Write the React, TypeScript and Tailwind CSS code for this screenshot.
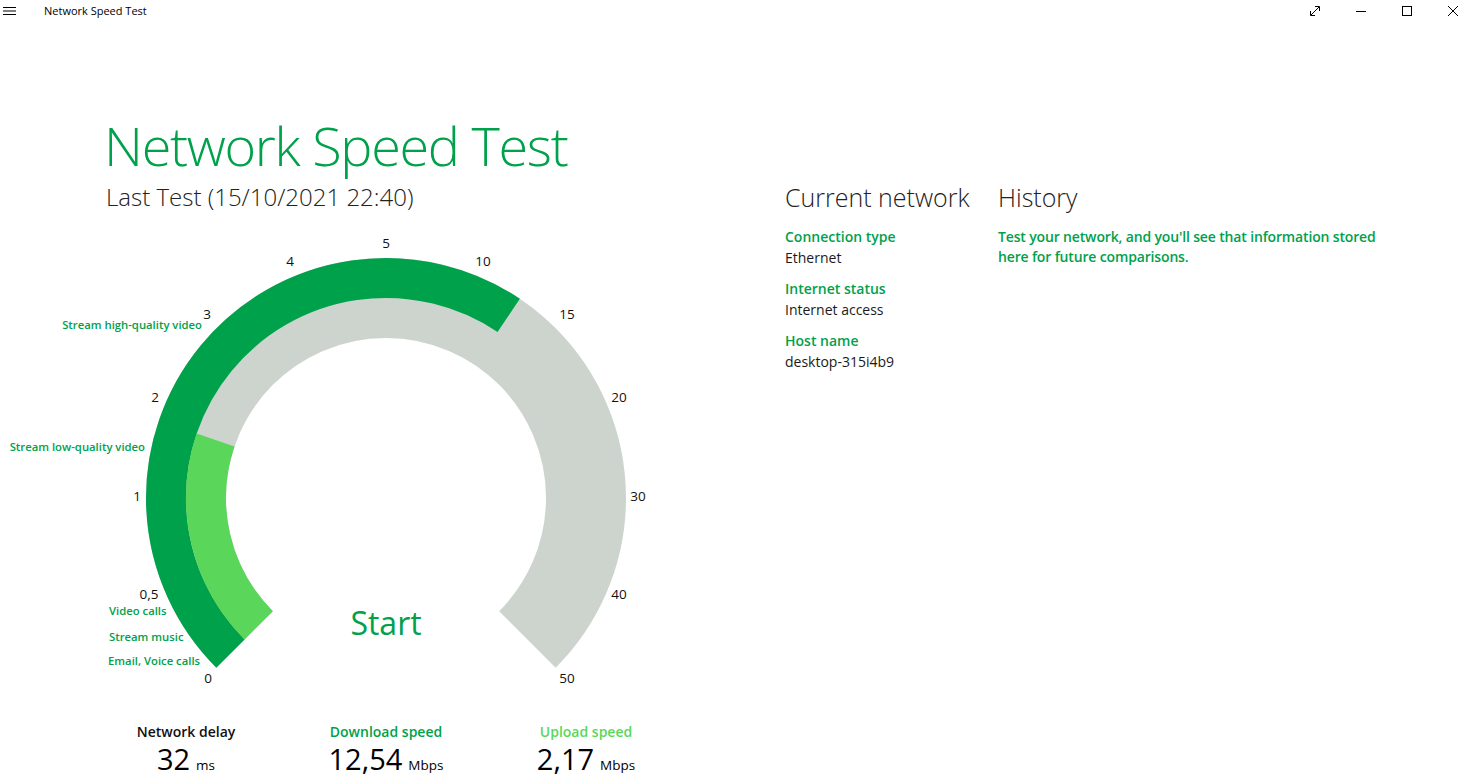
const GREEN = "#00A14B";
const LIGHT = "#5AD75A";
const GRAY = "#CDD4CE";

// gauge centre inside the svg (svg top sits at page y=230)
const CX = 386;
const CY = 267;
const TOP = 230;

function pt(r: number, deg: number): [number, number] {
  const a = (deg * Math.PI) / 180;
  return [CX + r * Math.cos(a), CY - r * Math.sin(a)];
}

function arc(r: number, from: number, to: number) {
  const [x1, y1] = pt(r, from);
  const [x2, y2] = pt(r, to);
  const large = from - to > 180 ? 1 : 0;
  return `M ${x1} ${y1} A ${r} ${r} 0 ${large} 1 ${x2} ${y2}`;
}

// tick label centres, page coords
const ticks: [string, number, number][] = [
  ["0", 208, 678],
  ["0,5", 149, 594],
  ["1", 137, 496],
  ["2", 155, 397],
  ["3", 207, 314],
  ["4", 290, 261],
  ["5", 386, 243],
  ["10", 483, 261],
  ["15", 567, 314],
  ["20", 619, 397],
  ["30", 638, 496],
  ["40", 619, 594],
  ["50", 567, 678],
];

function Gauge() {
  return (
    <svg width={680} height={470} className="block">
      <path d={arc(200, 225, -45)} stroke={GRAY} strokeWidth={80} fill="none" />
      <path d={arc(220, 225, 56.1)} stroke={GREEN} strokeWidth={40} fill="none" />
      <path d={arc(180, 225, 161.2)} stroke={LIGHT} strokeWidth={40} fill="none" />
      {ticks.map(([t, x, y]) => (
        <text key={t} x={x} y={y - TOP - 1.5} textAnchor="middle" dominantBaseline="central" fontSize={13.5} fill="#111">
          {t}
        </text>
      ))}
      <g fill={GREEN} fontSize={11.3} fontWeight={600}>
        <text x={202} y={93.5} textAnchor="end" dominantBaseline="central">Stream high-quality video</text>
        <text x={145} y={215.5} textAnchor="end" dominantBaseline="central">Stream low-quality video</text>
        <text x={109} y={379.5} dominantBaseline="central">Video calls</text>
        <text x={109} y={405.5} dominantBaseline="central">Stream music</text>
        <text x={108} y={429.5} dominantBaseline="central">Email, Voice calls</text>
      </g>
      <text x={CX} y={391} textAnchor="middle" dominantBaseline="central" fontSize={32} fill={GREEN}>
        Start
      </text>
    </svg>
  );
}

function Stat({ label, color, value, unit }: { label: string; color: string; value: string; unit: string }) {
  return (
    <div className="flex flex-col items-center">
      <div className="text-[14px] leading-5 font-semibold" style={{ color }}>{label}</div>
      <div className="mt-[1px] flex items-baseline gap-[6px] text-black">
        <span className="text-[29px] leading-8">{value}</span>
        <span className="text-[13.5px] leading-4">{unit}</span>
      </div>
    </div>
  );
}

export default function App() {
  return (
    <div className="w-[1471px] h-[783px] bg-white overflow-hidden font-['Open_Sans',sans-serif] text-[#1a1a1a]">
      {/* title bar */}
      <div className="h-[22px] flex items-center">
        <svg width={13} height={10} className="ml-[3px]" viewBox="0 0 13 10">
          <path d="M0 1.5h13M0 5h13M0 8.5h13" stroke="#000" strokeWidth={1} />
        </svg>
        <span className="ml-[28px] text-[11px] text-black">Network Speed Test</span>
        <div className="ml-auto flex items-center gap-[36px] pr-[13px]">
          <svg width={10} height={10} viewBox="0 0 10 10" fill="none" stroke="#000" strokeWidth={1}>
            <path d="M1 9L9 1M5 0.5h4.5v4.5M0.5 5v4.5H5" />
          </svg>
          <svg width={10} height={10} viewBox="0 0 10 10" fill="none" stroke="#000" strokeWidth={1}>
            <path d="M0 5.5h10" />
          </svg>
          <svg width={10} height={10} viewBox="0 0 10 10" fill="none" stroke="#000" strokeWidth={1}>
            <rect x={0.5} y={0.5} width={9} height={9} />
          </svg>
          <svg width={10} height={10} viewBox="0 0 10 10" fill="none" stroke="#000" strokeWidth={1}>
            <path d="M0 0L10 10M10 0L0 10" />
          </svg>
        </div>
      </div>

      <div className="flex">
        {/* left column */}
        <div className="w-[785px] shrink-0">
          <div className="pl-[104px] pt-[95px]">
            <h1 className="text-[54px] leading-[56px] font-light tracking-[-1.3px]" style={{ color: GREEN }}>
              Network Speed Test
            </h1>
            <div className="mt-[8px] pl-[2px] text-[24px] leading-8 font-light text-[#222]">
              Last Test (15/10/2021 22:40)
            </div>
          </div>
          <div className="mt-[18px]">
            <Gauge />
          </div>
          <div className="mt-[21px] ml-[86px] grid grid-cols-[200px_200px_200px]">
            <Stat label="Network delay" color="#111" value="32" unit="ms" />
            <Stat label="Download speed" color={GREEN} value="12,54" unit="Mbps" />
            <Stat label="Upload speed" color={LIGHT} value="2,17" unit="Mbps" />
          </div>
        </div>

        {/* right columns */}
        <div className="pt-[159px] flex">
          <div className="w-[213px]">
            <div className="text-[25px] leading-8 font-light text-[#222]">Current network</div>
            <div className="mt-[14px] flex flex-col gap-[11px] text-[14px]">
              {[
                ["Connection type", "Ethernet"],
                ["Internet status", "Internet access"],
                ["Host name", "desktop-315i4b9"],
              ].map(([k, v]) => (
                <div key={k}>
                  <div className="leading-5 font-semibold" style={{ color: GREEN }}>{k}</div>
                  <div className="mt-[1px] leading-5">{v}</div>
                </div>
              ))}
            </div>
          </div>
          <div>
            <div className="text-[25px] leading-8 font-light text-[#222]">History</div>
            <p className="mt-[14px] text-[14px] leading-5 font-semibold tracking-[-0.15px]" style={{ color: GREEN }}>
              Test your network, and you'll see that information stored
              <br />
              here for future comparisons.
            </p>
          </div>
        </div>
      </div>
    </div>
  );
}
